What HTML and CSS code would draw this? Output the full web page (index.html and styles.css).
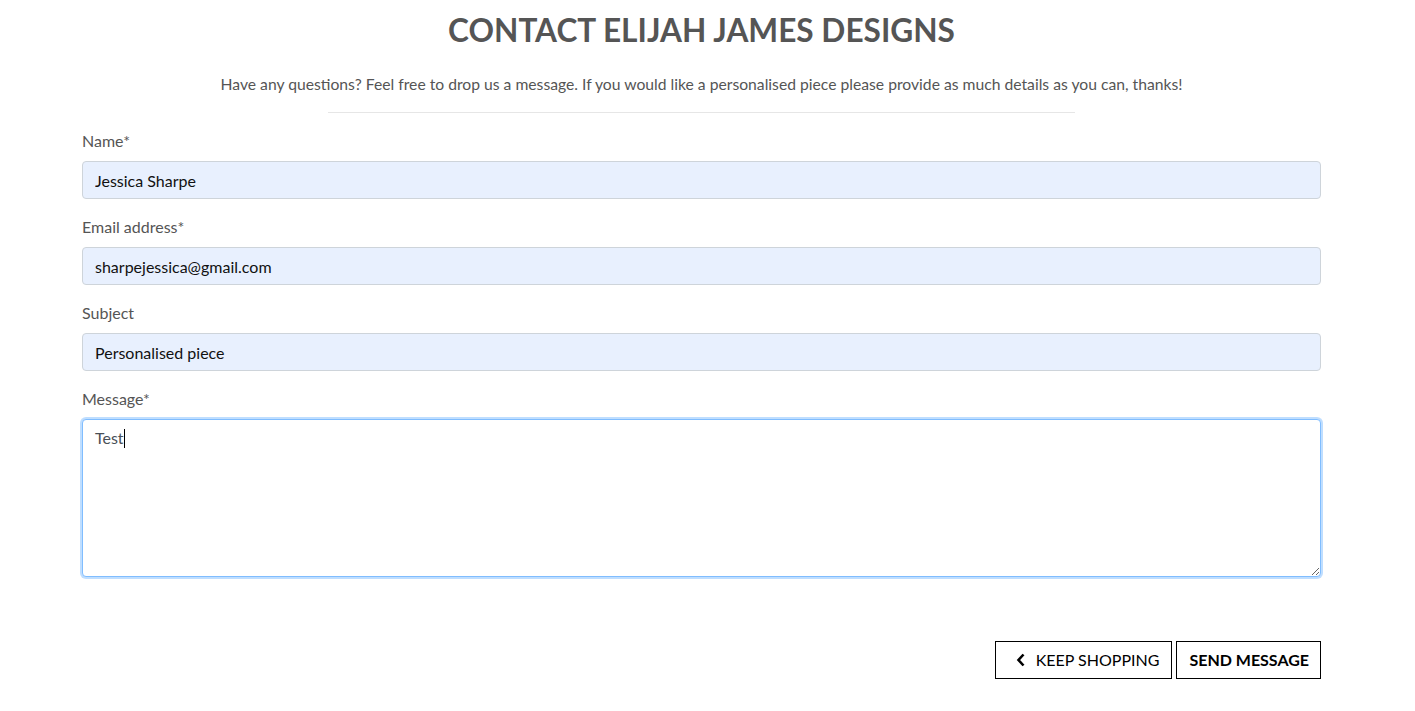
FILE: index.html
```html
<!DOCTYPE html>
<html lang="en">
<head>
<meta charset="utf-8">
<title>Contact</title>
<link rel="stylesheet" href="styles.css">
</head>
<body>
<main class="page">
  <h2 class="title">Contact Elijah James Designs</h2>
  <p class="intro">Have any questions? Feel free to drop us a message. If you would like a personalised piece please provide as much details as you can, thanks!</p>
  <hr class="rule">
  <form class="form">
    <div class="group">
      <label class="label" for="name">Name*</label>
      <input class="input filled" id="name" type="text" value="Jessica Sharpe">
    </div>
    <div class="group">
      <label class="label" for="email">Email address*</label>
      <input class="input filled" id="email" type="email" value="sharpejessica@gmail.com">
    </div>
    <div class="group">
      <label class="label" for="subject">Subject</label>
      <input class="input filled" id="subject" type="text" value="Personalised piece">
    </div>
    <div class="group">
      <label class="label" for="message">Message*</label>
      <div class="area-wrap">
        <textarea class="input area focused" id="message">Test</textarea>
        <span class="caret"></span>
      </div>
    </div>
    <div class="actions">
      <a class="btn" href="#"><svg class="chev" viewBox="0 0 10 14" width="10" height="14"><path d="M7.5 1.5 L2.5 7 L7.5 12.5" fill="none" stroke="#000" stroke-width="2.6"/></svg>Keep Shopping</a>
      <button class="btn btn-bold" type="button">Send Message</button>
    </div>
  </form>
</main>
</body>
</html>
```
FILE: styles.css
```css
* { box-sizing: border-box; }
html, body { margin: 0; padding: 0; background: #fff; }
body {
  font-family: Lato, "Liberation Sans", Arial, sans-serif;
  font-size: 16px;
  line-height: 1.5;
  color: #555;
}
.page {
  padding: 11px 94px 0 82px;
}
.title {
  margin: 0;
  text-align: center;
  text-transform: uppercase;
  font-size: 31.6px;
  font-weight: 700;
  line-height: 38px;
  color: #555;
}
.intro {
  margin: 23px 0 16px;
  text-align: center;
  line-height: 24px;
  font-size: 15.7px;
  color: #555;
}
.rule {
  width: 60.3%;
  margin: 0 auto 16px;
  border: 0;
  border-top: 1px solid #e6e6e6;
  height: 0;
}
.form { display: flex; flex-direction: column; }
.group {
  display: flex;
  flex-direction: column;
  margin-bottom: 16px;
}
.label {
  margin-bottom: 8px;
  line-height: 24px;
  color: #555;
}
.input {
  display: block;
  width: 100%;
  height: 38px;
  padding: 6px 12px;
  font-family: inherit;
  font-size: 16px;
  line-height: 24px;
  color: #495057;
  background: #fff;
  border: 1px solid #ced4da;
  border-radius: 4px;
  outline: none;
}
.filled {
  background: #e8f0fe;
  color: #111;
}
.area-wrap { position: relative; }
.area {
  height: 158px;
  resize: vertical;
}
.focused {
  border-color: #80bdff;
  box-shadow: 0 0 0 2px rgba(0, 123, 255, 0.25);
}
.caret {
  position: absolute;
  left: 42px;
  top: 10px;
  width: 1px;
  height: 19px;
  background: #000;
}
.actions {
  display: flex;
  justify-content: flex-end;
  gap: 4px;
  margin-top: 48px;
}
.btn {
  display: inline-flex;
  align-items: center;
  height: 38px;
  padding: 0 12px;
  font-family: inherit;
  font-size: 16px;
  line-height: 24px;
  text-transform: uppercase;
  text-decoration: none;
  color: #000;
  background: #fff;
  border: 1px solid #000;
  border-radius: 0;
  cursor: pointer;
}
.btn:first-child { padding-left: 20px; }
.chev { margin-right: 10px; }
.btn-bold { font-weight: 700; padding: 0 11px 0 12px; }
```
